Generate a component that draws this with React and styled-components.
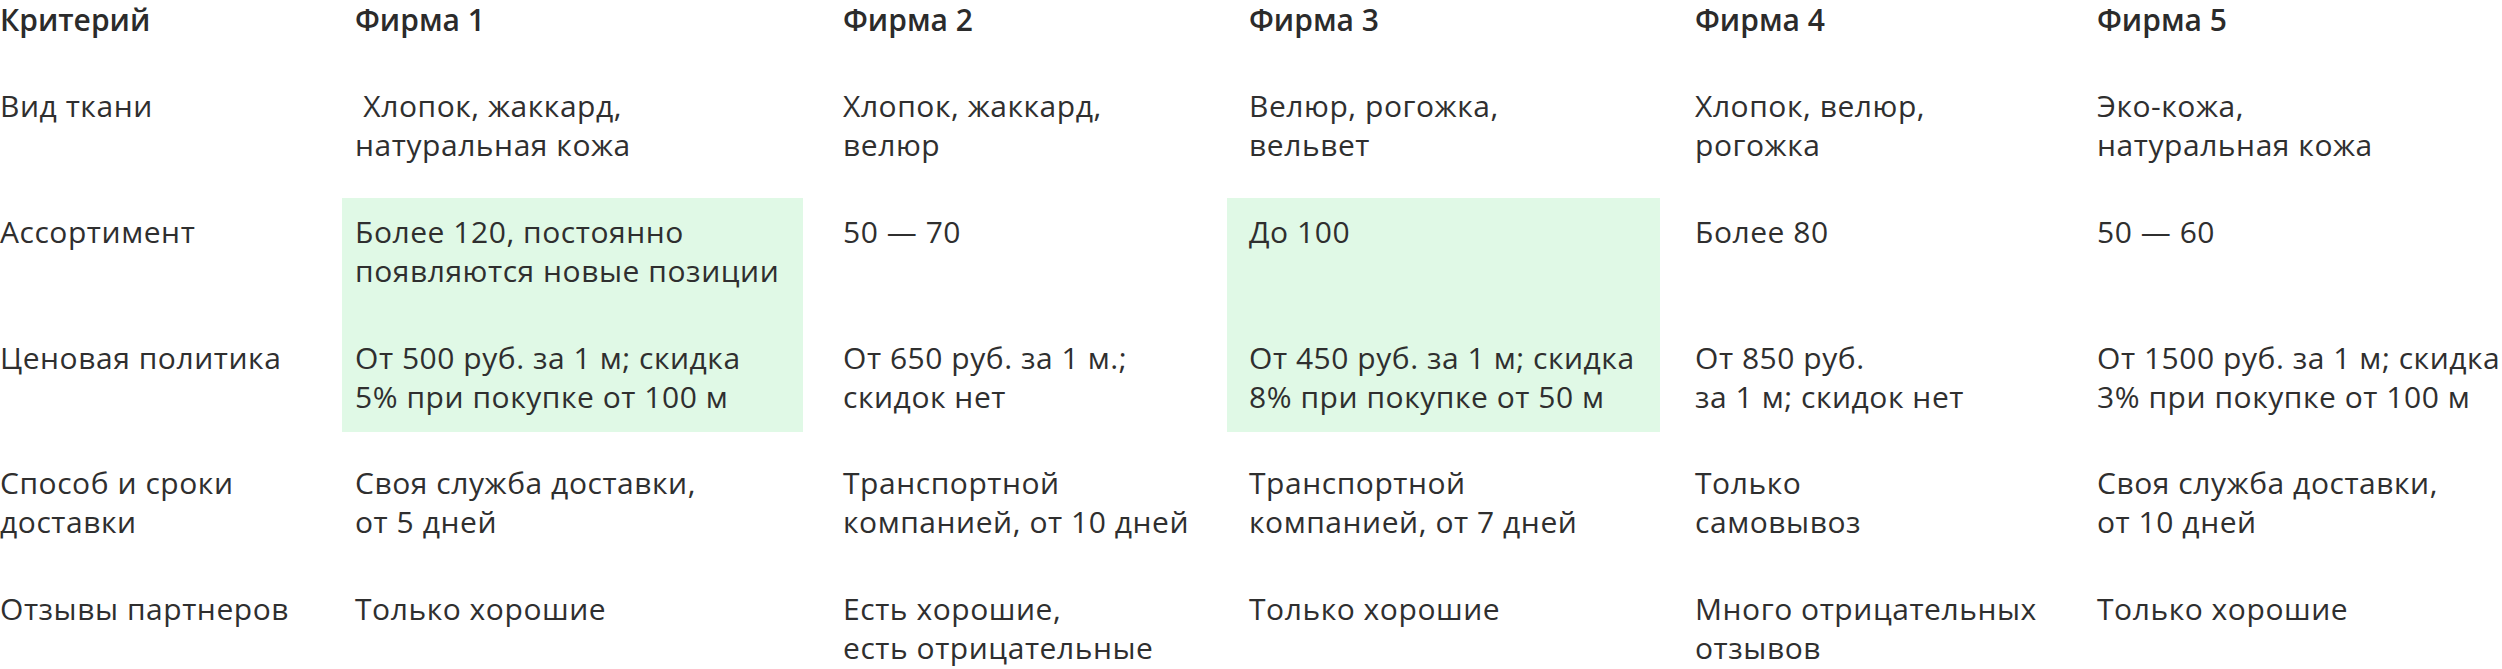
import React from 'react'
import styled, { createGlobalStyle } from 'styled-components'

const GlobalStyle = createGlobalStyle`
  html, body {
    margin: 0;
    padding: 0;
    background: #ffffff;
  }
  body {
    font-family: "Open Sans", "Noto Sans", sans-serif;
    color: #2f2f2f;
    overflow: hidden;
  }
`

// text starts inside each column
const colPad = [0, 13, 40, 22, 35, 13]

const Table = styled.div`
  display: grid;
  grid-template-columns: 342px 461px 424px 433px 424px 1fr;
  grid-template-rows: 72.4px repeat(5, 125.6px);
  width: 2502px;
`

const HeadCell = styled.div`
  padding-left: ${p => p.$pad}px;
  font-size: 30px;
  line-height: 39px;
  font-weight: 600;
  white-space: nowrap;
  color: #2b2b2b;
`

const Cell = styled.div`
  padding: 14px 0 16px ${p => p.$pad}px;
  font-size: 30px;
  line-height: 39px;
  letter-spacing: 0.55px;
  white-space: nowrap;
  background: ${p => (p.$hl ? '#e0f9e6' : 'transparent')};
  align-self: ${p => (p.$short ? 'start' : 'stretch')};
`

const heads = ['Критерий', 'Фирма 1', 'Фирма 2', 'Фирма 3', 'Фирма 4', 'Фирма 5']

const rows = [
  [
    ['Вид ткани'],
    ['\u00A0Хлопок, жаккард,', 'натуральная кожа'],
    ['Хлопок, жаккард,', 'велюр'],
    ['Велюр, рогожка,', 'вельвет'],
    ['Хлопок, велюр,', 'рогожка'],
    ['Эко-кожа,', 'натуральная кожа'],
  ],
  [
    ['Ассортимент'],
    ['Более 120, постоянно', 'появляются новые позиции'],
    ['50 — 70'],
    ['До 100'],
    ['Более 80'],
    ['50 — 60'],
  ],
  [
    ['Ценовая политика'],
    ['От 500 руб. за 1 м; скидка', '5% при покупке от 100 м'],
    ['От 650 руб. за 1 м.;', 'скидок нет'],
    ['От 450 руб. за 1 м; скидка', '8% при покупке от 50 м'],
    ['От 850 руб.', 'за 1 м; скидок нет'],
    ['От 1500 руб. за 1 м; скидка', '3% при покупке от 100 м'],
  ],
  [
    ['Способ и сроки', 'доставки'],
    ['Своя служба доставки,', 'от 5 дней'],
    ['Транспортной', 'компанией, от 10 дней'],
    ['Транспортной', 'компанией, от 7 дней'],
    ['Только', 'самовывоз'],
    ['Своя служба доставки,', 'от 10 дней'],
  ],
  [
    ['Отзывы партнеров'],
    ['Только хорошие'],
    ['Есть хорошие,', 'есть отрицательные'],
    ['Только хорошие'],
    ['Много отрицательных', 'отзывов'],
    ['Только хорошие'],
  ],
]

// highlighted cells: [row, col]
const green = ['1-1', '1-3', '2-1', '2-3']

const App = () => {
  return (
    <>
      <GlobalStyle />
      <Table>
        {heads.map((h, i) => (
          <HeadCell key={h} $pad={colPad[i]}>{h}</HeadCell>
        ))}
        {rows.map((row, r) =>
          row.map((lines, c) => {
            const hl = green.includes(`${r}-${c}`)
            // the lower green cell only wraps its own text
            const short = hl && !green.includes(`${r + 1}-${c}`)
            return (
              <Cell key={`${r}-${c}`} $pad={colPad[c]} $hl={hl} $short={short}>
                {lines.map((l, i) => (
                  <React.Fragment key={i}>
                    {i > 0 && <br />}
                    {l}
                  </React.Fragment>
                ))}
              </Cell>
            )
          })
        )}
      </Table>
    </>
  )
}

export default App
